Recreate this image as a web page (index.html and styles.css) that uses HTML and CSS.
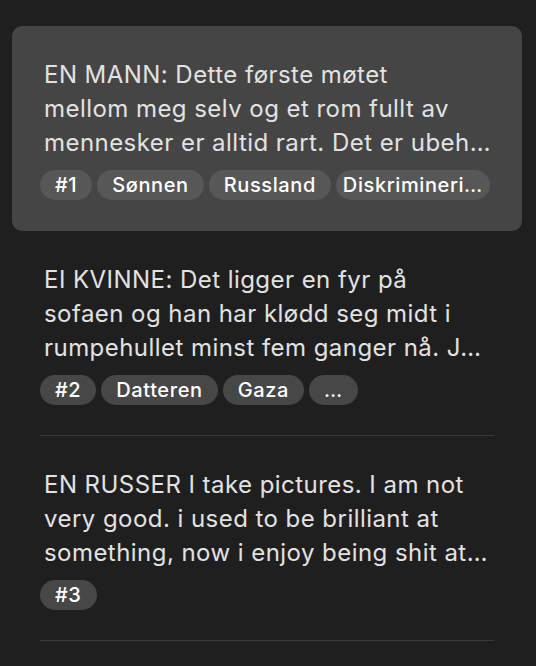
FILE: index.html
```html
<!DOCTYPE html>
<html lang="no">
<head>
<meta charset="utf-8">
<link rel="stylesheet" href="styles.css">
</head>
<body>
<div class="list">
  <div class="item selected">
    <div class="inner">
      <p class="text">EN MANN: Dette første møtet<br>mellom meg selv og et rom fullt av<br>mennesker er alltid rart. Det er ubeh…</p>
      <div class="tags">
        <span class="tag">#1</span>
        <span class="tag">Sønnen</span>
        <span class="tag">Russland</span>
        <span class="tag clipped">Diskrimineri…</span>
      </div>
    </div>
  </div>
  <div class="item">
    <div class="inner">
      <p class="text">EI KVINNE: Det ligger en fyr på<br>sofaen og han har klødd seg midt i<br>rumpehullet minst fem ganger nå. J…</p>
      <div class="tags">
        <span class="tag">#2</span>
        <span class="tag">Datteren</span>
        <span class="tag">Gaza</span>
        <span class="tag">…</span>
      </div>
    </div>
  </div>
  <div class="item">
    <div class="inner">
      <p class="text">EN RUSSER I take pictures. I am not<br>very good. i used to be brilliant at<br>something, now i enjoy being shit at…</p>
      <div class="tags">
        <span class="tag">#3</span>
      </div>
    </div>
  </div>
</div>
</body>
</html>
```
FILE: styles.css
```css
html, body {
  margin: 0;
  padding: 0;
  background: #1f1f1f;
}
body {
  font-family: Inter, "Noto Sans", sans-serif;
  -webkit-font-smoothing: antialiased;
}
.list {
  padding: 26px 14px 0 12px;
}
.item {
  padding: 0 28px;
  border-radius: 10px;
}
.item.selected {
  background: #454545;
}
.inner {
  padding: 32px 0 30px;
  border-bottom: 1px solid #393939;
}
.item.selected .inner {
  border-bottom-color: transparent;
}
.text {
  margin: 0;
  padding: 0 0 0 4px;
  font-size: 24px;
  line-height: 34px;
  letter-spacing: 0.45px;
  color: #e2e2e2;
  white-space: nowrap;
}
.tags {
  margin-top: 10px;
  display: flex;
  gap: 5px;
}
.tag {
  flex: 0 0 auto;
  height: 30px;
  line-height: 30px;
  padding: 0 15px;
  border-radius: 15px;
  background: #474747;
  color: #ffffff;
  font-size: 20px;
  font-weight: 500;
  letter-spacing: 0.6px;
  white-space: nowrap;
}
.tag.clipped {
  padding: 0 7px;
}
.item.selected .tag {
  background: #575757;
}
```
